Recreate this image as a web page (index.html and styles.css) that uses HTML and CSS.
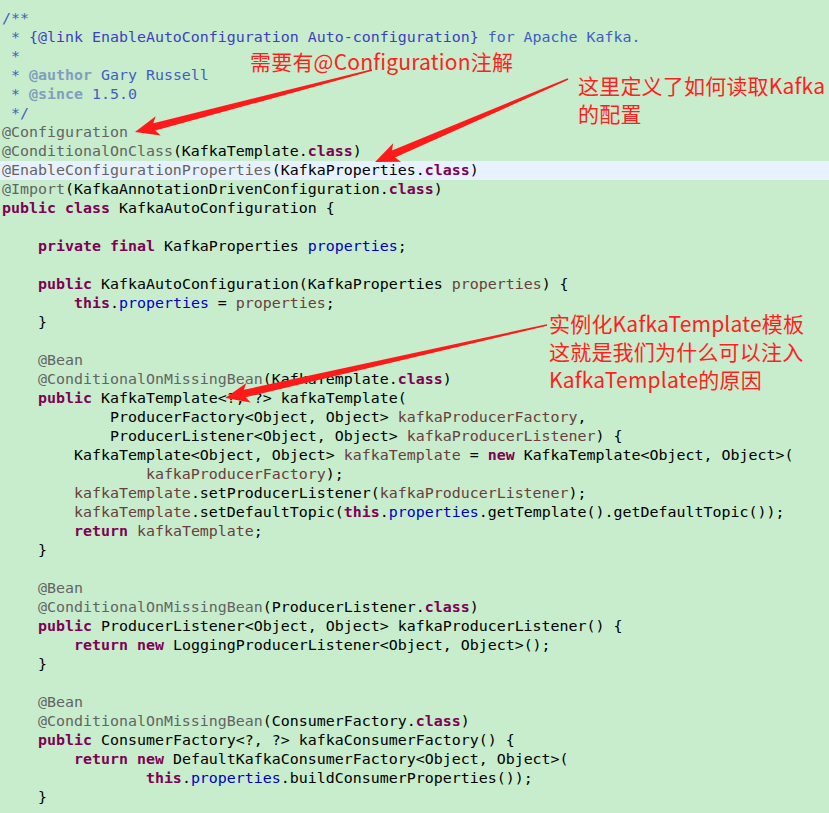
FILE: index.html
```html
<!DOCTYPE html>
<html lang="zh-CN">
<head>
    <meta charset="UTF-8">
    <meta name="viewport" content="width=device-width, initial-scale=1.0">
    <title>KafkaAutoConfiguration</title>
    <link rel="stylesheet" href="styles.css">
</head>
<body>
    <div class="editor">
        <!-- código fonte -->
        <pre class="codigo"><div class="linha"><span class="cm">/**</span></div><div class="linha"><span class="cm"> * </span><span class="lk">{@link EnableAutoConfiguration Auto-configuration}</span><span class="cm"> for Apache Kafka.</span></div><div class="linha"><span class="cm"> *</span></div><div class="linha"><span class="cm"> * </span><span class="tag">@author</span><span class="cm"> Gary Russell</span></div><div class="linha"><span class="cm"> * </span><span class="tag">@since</span><span class="cm"> 1.5.0</span></div><div class="linha"><span class="cm"> */</span></div><div class="linha"><span class="an">@Configuration</span></div><div class="linha"><span class="an">@ConditionalOnClass</span>(KafkaTemplate.<span class="kw">class</span>)</div><div class="linha atual"><span class="an">@EnableConfigurationProperties</span>(KafkaProperties.<span class="kw">class</span>)</div><div class="linha"><span class="an">@Import</span>(KafkaAnnotationDrivenConfiguration.<span class="kw">class</span>)</div><div class="linha"><span class="kw">public</span> <span class="kw">class</span> KafkaAutoConfiguration {</div><div class="linha"> </div><div class="linha">    <span class="kw">private</span> <span class="kw">final</span> KafkaProperties <span class="fd">properties</span>;</div><div class="linha"> </div><div class="linha">    <span class="kw">public</span> KafkaAutoConfiguration(KafkaProperties <span class="lv">properties</span>) {</div><div class="linha">        <span class="kw">this</span>.<span class="fd">properties</span> = <span class="lv">properties</span>;</div><div class="linha">    }</div><div class="linha"> </div><div class="linha">    <span class="an">@Bean</span></div><div class="linha">    <span class="an">@ConditionalOnMissingBean</span>(KafkaTemplate.<span class="kw">class</span>)</div><div class="linha">    <span class="kw">public</span> KafkaTemplate&lt;?, ?&gt; kafkaTemplate(</div><div class="linha">            ProducerFactory&lt;Object, Object&gt; <span class="lv">kafkaProducerFactory</span>,</div><div class="linha">            ProducerListener&lt;Object, Object&gt; <span class="lv">kafkaProducerListener</span>) {</div><div class="linha">        KafkaTemplate&lt;Object, Object&gt; <span class="lv">kafkaTemplate</span> = <span class="kw">new</span> KafkaTemplate&lt;Object, Object&gt;(</div><div class="linha">                <span class="lv">kafkaProducerFactory</span>);</div><div class="linha">        <span class="lv">kafkaTemplate</span>.setProducerListener(<span class="lv">kafkaProducerListener</span>);</div><div class="linha">        <span class="lv">kafkaTemplate</span>.setDefaultTopic(<span class="kw">this</span>.<span class="fd">properties</span>.getTemplate().getDefaultTopic());</div><div class="linha">        <span class="kw">return</span> <span class="lv">kafkaTemplate</span>;</div><div class="linha">    }</div><div class="linha"> </div><div class="linha">    <span class="an">@Bean</span></div><div class="linha">    <span class="an">@ConditionalOnMissingBean</span>(ProducerListener.<span class="kw">class</span>)</div><div class="linha">    <span class="kw">public</span> ProducerListener&lt;Object, Object&gt; kafkaProducerListener() {</div><div class="linha">        <span class="kw">return</span> <span class="kw">new</span> LoggingProducerListener&lt;Object, Object&gt;();</div><div class="linha">    }</div><div class="linha"> </div><div class="linha">    <span class="an">@Bean</span></div><div class="linha">    <span class="an">@ConditionalOnMissingBean</span>(ConsumerFactory.<span class="kw">class</span>)</div><div class="linha">    <span class="kw">public</span> ConsumerFactory&lt;?, ?&gt; kafkaConsumerFactory() {</div><div class="linha">        <span class="kw">return</span> <span class="kw">new</span> DefaultKafkaConsumerFactory&lt;Object, Object&gt;(</div><div class="linha">                <span class="kw">this</span>.<span class="fd">properties</span>.buildConsumerProperties());</div><div class="linha">    }</div></pre>

        <!-- setas vermelhas por cima do código -->
        <svg class="setas" width="829" height="813" viewBox="0 0 829 813">
            <g transform="translate(372 70) rotate(165.34)">
                <polygon points="0,-0.8 225,-3.8 221,-10 245,0 221,10 225,3.8 0,0.8"/>
            </g>
            <g transform="translate(568 79) rotate(156.73)">
                <polygon points="0,-0.8 190,-3.8 186,-10 210,0 186,10 190,3.8 0,0.8"/>
            </g>
            <g transform="translate(547 325) rotate(167.23)">
                <polygon points="0,-0.8 310,-3.8 306,-10 330,0 306,10 310,3.8 0,0.8"/>
            </g>
        </svg>

        <!-- notas -->
        <p class="nota nota1">需要有@Configuration注解</p>
        <p class="nota nota2">这里定义了如何读取Kafka<br>的配置</p>
        <p class="nota nota3">实例化KafkaTemplate模板<br>这就是我们为什么可以注入<br>KafkaTemplate的原因</p>
    </div>
</body>
</html>
```

FILE: styles.css
```css
*{
    margin: 0;
    padding: 0;
}
body{
    background-color: #c7edcc;
    overflow: hidden;
}
.editor{
    position: relative;
    width: 829px;
    height: 813px;
}
/* bloco de código */
.codigo{
    padding-top: 9px;
    font-family: "DejaVu Sans Mono", "Liberation Mono", monospace;
    font-size: 14.95px;
    line-height: 19px;
    color: #000;
}
.linha{
    height: 19px;
    padding-left: 2px;
    white-space: pre;
}
.atual{
    background-color: #e8f2fe;
}
.cm{
    color: #3f5fbf;
}
.lk{
    color: #3f3fbf;
}
.tag{
    color: #7f9fbf;
    font-weight: bold;
}
.an{
    color: #646464;
}
.kw{
    color: #7f0055;
    font-weight: bold;
}
.fd{
    color: #0000c0;
}
.lv{
    color: #6a3e3e;
}
/* setas */
.setas{
    position: absolute;
    top: 0;
    left: 0;
    fill: #ff1a1a;
}
/* notas vermelhas */
.nota{
    position: absolute;
    font-family: "Noto Sans CJK SC", "Noto Sans", sans-serif;
    font-size: 21px;
    line-height: 28px;
    color: #ff1f1f;
    white-space: nowrap;
    letter-spacing: 0.2px;
}
.nota1{
    left: 250px;
    top: 47px;
}
.nota2{
    left: 578px;
    top: 71px;
}
.nota3{
    left: 549px;
    top: 309px;
}
```
